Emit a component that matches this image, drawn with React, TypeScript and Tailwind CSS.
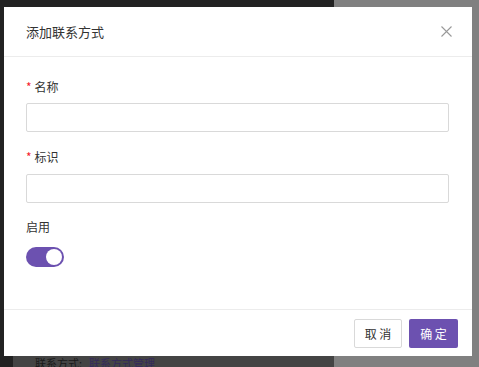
import React, { useState } from 'react';

const font = { fontFamily: '"Noto Sans CJK SC", "Noto Sans", sans-serif' };

const Field = ({ label, required, className, gap = 'mt-[6px]' }: { label: string; required?: boolean; className?: string; gap?: string }) => (
  <div className={className}>
    <div className="h-[20px] flex items-center text-[12px] text-[#333]">
      {required && <span className="text-[#f5222d] mr-[3px] text-[12px] leading-none">*</span>}
      {label}
    </div>
    <input className={`${gap} block w-full h-[29px] border border-[#d9d9d9] rounded-[2px] bg-white outline-none px-[8px] text-[12px]`} />
  </div>
);

const App: React.FC = () => {
  const [enabled, setEnabled] = useState(true);

  return (
    <div className="relative w-[479px] h-[367px] overflow-hidden flex" style={font}>
      <div className="w-[334px] h-full bg-[#222] flex flex-col justify-end">
        <div className="ml-[13px] h-[24px] bg-[#444] overflow-hidden pl-[22px] pt-[12px] text-[11px] leading-[16px] whitespace-nowrap">
          <span className="text-[#1a1a1a]">联系方式:</span>
          <span className="ml-[7px] text-[#342a5c]">联系方式管理</span>
        </div>
      </div>
      <div className="flex-1 h-full bg-[#808080]" />

      {/* modal */}
      <div className="absolute left-[4px] top-[7px] w-[468px] h-[349px] bg-white flex flex-col">
        <div className="h-[50px] border-b border-[#ececec] flex items-center justify-between pl-[22px] pr-[20px] shrink-0">
          <span className="text-[13px] text-[#333]">添加联系方式</span>
          <svg width="11" height="11" viewBox="0 0 11 11">
            <path d="M0.5 0.5 L10.5 10.5 M10.5 0.5 L0.5 10.5" stroke="#999" strokeWidth="1.1" fill="none" />
          </svg>
        </div>

        <div className="flex-1 pl-[22px] pr-[23px] pt-[20px]">
          <Field label="名称" required />
          <Field label="标识" required className="mt-[15px]" gap="mt-[7px]" />
          <div className="mt-[14px] h-[20px] flex items-center text-[12px] text-[#333]">启用</div>
          <button
            onClick={() => setEnabled(!enabled)}
            className={`mt-[10px] w-[38px] h-[20px] rounded-full flex items-center px-[2px] ${enabled ? 'bg-[#6c51b0] justify-end' : 'bg-[#bfbfbf] justify-start'}`}
          >
            <span className="w-[16px] h-[16px] rounded-full bg-white" />
          </button>
        </div>

        <div className="h-[47px] border-t border-[#ececec] flex items-start justify-end gap-[7px] pt-[9px] pr-[14px] shrink-0">
          <button className="w-[48px] h-[29px] border border-[#d9d9d9] rounded-[2px] bg-white text-[12px] text-[#333]">取 消</button>
          <button className="w-[49px] h-[29px] rounded-[2px] bg-[#6c51b0] text-[12px] text-white">确 定</button>
        </div>
      </div>
    </div>
  );
};

export default App;
